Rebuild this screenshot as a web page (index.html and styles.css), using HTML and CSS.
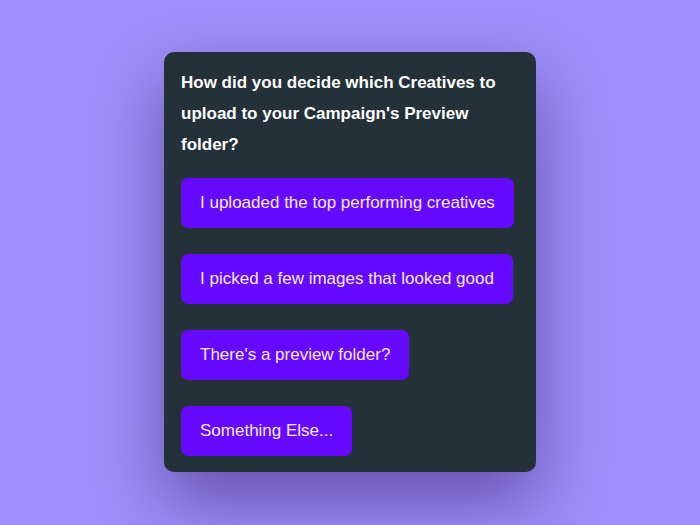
FILE: index.html
```html
<!DOCTYPE html>
<html lang="en">

<head>
    <meta charset="UTF-8">
    <meta name="viewport" content="width=device-width, initial-scale=1.0">
    <title>Survey Question</title>
    <link rel="stylesheet" href="styles.css">
</head>

<body>
    <div class="page">
        <div class="question-card">
            <p class="question-text">How did you decide which Creatives to upload to your Campaign's Preview folder?</p>
            <div class="answer-list">
                <button class="answer-btn">I uploaded the top performing creatives</button>
                <button class="answer-btn">I picked a few images that looked good</button>
                <button class="answer-btn">There's a preview folder?</button>
                <button class="answer-btn">Something Else...</button>
            </div>
        </div>
    </div>
</body>

</html>
```

FILE: styles.css
```css
body,
html {
    margin: 0;
    padding: 0;
    font-family: 'Liberation Sans', Arial, sans-serif;
    height: 100%;
}

.page {
    background-color: #a08ffa;
    height: 100%;
    display: flex;
    justify-content: center;
    align-items: flex-start;
    padding-top: 52px;
    box-sizing: border-box;
    overflow: hidden;
}

.question-card {
    background-color: #243139;
    width: 372px;
    box-sizing: border-box;
    padding: 15px 17px 16px;
    border-radius: 10px;
    box-shadow: 0 30px 70px rgba(50, 30, 110, 0.55);
}

.question-text {
    margin: 0 0 18px;
    color: white;
    font-size: 17px;
    font-weight: bold;
    line-height: 31px;
}

.answer-list {
    display: flex;
    flex-direction: column;
    align-items: flex-start;
    gap: 26px;
}

.answer-btn {
    background-color: #6609ff;
    color: #f3eaff;
    border: none;
    border-radius: 7px;
    height: 50px;
    padding: 0 19px;
    font-family: inherit;
    font-size: 17px;
    cursor: pointer;
}
```
